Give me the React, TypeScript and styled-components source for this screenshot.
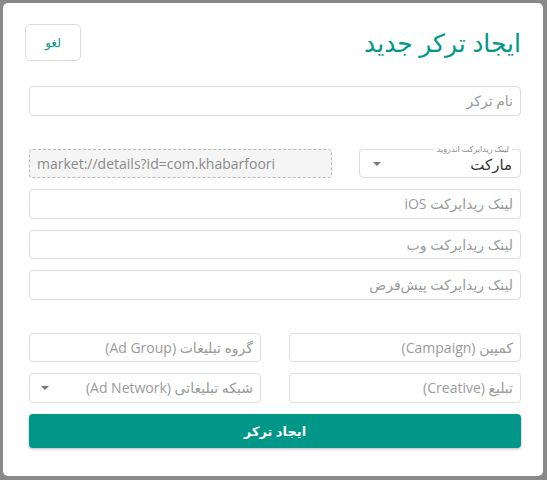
import React from "react";
import styled, { createGlobalStyle } from "styled-components";

const Global = createGlobalStyle`
  html, body { margin: 0; padding: 0; }
  body {
    background: #898989;
    font-family: "Open Sans", "DejaVu Sans", sans-serif;
  }
  * { box-sizing: border-box; }
`;

const Backdrop = styled.div`
  width: 547px;
  height: 480px;
  padding: 3px 4px 4px 3px;
  background: #898989;
`;

const Modal = styled.div`
  direction: rtl;
  width: 540px;
  height: 473px;
  background: #fff;
  border-radius: 5px;
  padding: 21px 22px 0 26px;
  display: flex;
  flex-direction: column;
`;

const Header = styled.div`
  display: flex;
  align-items: center;
  justify-content: space-between;
  height: 37px;
  margin-left: -4px;
`;

const Title = styled.h1`
  margin: 0;
  font-size: 25px;
  font-weight: 400;
  color: #009688;
  line-height: 1;
`;

const CancelButton = styled.button`
  width: 56px;
  height: 37px;
  border: 1px solid #dcdcdc;
  border-radius: 5px;
  background: #fff;
  color: #009688;
  font-family: "Open Sans", "DejaVu Sans", sans-serif;
  font-size: 12px;
  padding: 0;
`;

const Field = styled.div<{ $mt: number }>`
  margin-top: ${(p) => p.$mt}px;
`;

const Input = styled.div<{ $dashed?: boolean }>`
  position: relative;
  height: 29.5px;
  border: 1px ${(p) => (p.$dashed ? "dashed #b9b9b9" : "solid #dedede")};
  background: ${(p) => (p.$dashed ? "#f5f5f5" : "#fff")};
  direction: ${(p) => (p.$dashed ? "ltr" : "rtl")};
  border-radius: 4px;
  display: flex;
  align-items: center;
  padding: 0 7px;
  font-size: 14px;
  color: #9a9a9a;
  white-space: nowrap;
  overflow: hidden;
`;

const LtrText = styled.span`
  color: #8a8a8a;
  font-size: 14px;
`;

const Grid = styled.div<{ $cols: string; $gap: number }>`
  display: grid;
  grid-template-columns: ${(p) => p.$cols};
  column-gap: ${(p) => p.$gap}px;
`;

const Outlined = styled.div`
  position: relative;
  height: 29.5px;
  border: 1px solid #dedede;
  border-radius: 4px;
  display: flex;
  align-items: center;
  justify-content: space-between;
  padding: 2px 8px 0 13px;
`;

const Legend = styled.span`
  position: absolute;
  top: -6px;
  right: 8px;
  padding: 0 3px;
  background: #fff;
  font-size: 8px;
  line-height: 10px;
  color: #888;
`;

const Value = styled.span`
  font-size: 15px;
  color: #333;
`;

const Caret = styled.span`
  width: 0;
  height: 0;
  border-left: 4px solid transparent;
  border-right: 4px solid transparent;
  border-top: 4px solid #777;
`;

const SelectBox = styled(Input)`
  justify-content: space-between;
  padding: 0 7px 0 11px;
`;

const Submit = styled.button`
  height: 34px;
  width: 100%;
  border: none;
  border-radius: 4px;
  background: #009688;
  color: #fff;
  font-family: "Open Sans", "DejaVu Sans", sans-serif;
  font-size: 13px;
  font-weight: 700;
  box-shadow: 0 1px 3px rgba(0, 0, 0, 0.3);
`;

export default function App() {
  return (
    <>
      <Global />
      <Backdrop>
        <Modal>
          <Header>
            <Title>ایجاد ترکر جدید</Title>
            <CancelButton>لغو</CancelButton>
          </Header>

          <Field $mt={25}>
            <Input>نام ترکر</Input>
          </Field>

          <Field $mt={33}>
            <Grid $cols="162px 1fr" $gap={27}>
              <Outlined>
                <Legend>لینک ریدایرکت اندروید</Legend>
                <Value>مارکت</Value>
                <Caret />
              </Outlined>
              <Input $dashed>
                <LtrText>market://details?id=com.khabarfoori</LtrText>
              </Input>
            </Grid>
          </Field>

          <Field $mt={11}>
            <Input>لینک ریدایرکت iOS</Input>
          </Field>
          <Field $mt={11}>
            <Input>لینک ریدایرکت وب</Input>
          </Field>
          <Field $mt={11}>
            <Input>لینک ریدایرکت پیش‌فرض</Input>
          </Field>

          <Field $mt={33}>
            <Grid $cols="1fr 1fr" $gap={28}>
              <Input>کمپین (Campaign)</Input>
              <Input>گروه تبلیغات (Ad Group)</Input>
            </Grid>
          </Field>
          <Field $mt={11}>
            <Grid $cols="1fr 1fr" $gap={28}>
              <Input>تبلیغ (Creative)</Input>
              <SelectBox>
                <span>شبکه تبلیغاتی (Ad Network)</span>
                <Caret />
              </SelectBox>
            </Grid>
          </Field>

          <Field $mt={11}>
            <Submit>ایجاد ترکر</Submit>
          </Field>
        </Modal>
      </Backdrop>
    </>
  );
}
